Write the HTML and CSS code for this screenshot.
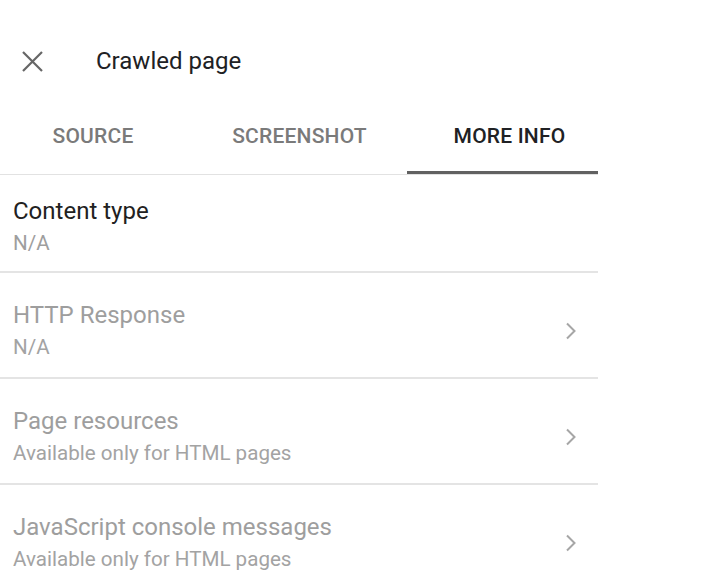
FILE: index.html
```html
<!DOCTYPE html>
<html>
<head>
<meta charset="utf-8">
<link rel="stylesheet" href="styles.css">
</head>
<body>
<div class="panel">
  <div class="header">
    <svg class="close" width="23" height="23" viewBox="0 0 23 23"><path d="M2 2L21 21M21 2L2 21" stroke="#666666" stroke-width="2.2" fill="none"/></svg>
    <div class="title">Crawled page</div>
  </div>
  <div class="tabs">
    <div class="tab tab-1">SOURCE</div>
    <div class="tab tab-2">SCREENSHOT</div>
    <div class="tab tab-3 active">MORE INFO</div>
  </div>
  <div class="row first">
    <div class="text">
      <div class="row-title">Content type</div>
      <div class="row-sub">N/A</div>
    </div>
  </div>
  <div class="row disabled">
    <div class="text">
      <div class="row-title">HTTP Response</div>
      <div class="row-sub">N/A</div>
    </div>
    <svg class="chev" width="12" height="18" viewBox="0 0 12 18"><path d="M2 1.5L9.5 9L2 16.5" stroke="#a6a6a6" stroke-width="2" fill="none"/></svg>
  </div>
  <div class="row disabled">
    <div class="text">
      <div class="row-title">Page resources</div>
      <div class="row-sub">Available only for HTML pages</div>
    </div>
    <svg class="chev" width="12" height="18" viewBox="0 0 12 18"><path d="M2 1.5L9.5 9L2 16.5" stroke="#a6a6a6" stroke-width="2" fill="none"/></svg>
  </div>
  <div class="row disabled last">
    <div class="text">
      <div class="row-title">JavaScript console messages</div>
      <div class="row-sub">Available only for HTML pages</div>
    </div>
    <svg class="chev" width="12" height="18" viewBox="0 0 12 18"><path d="M2 1.5L9.5 9L2 16.5" stroke="#a6a6a6" stroke-width="2" fill="none"/></svg>
  </div>
</div>
</body>
</html>
```
FILE: styles.css
```css
html, body {
  margin: 0;
  padding: 0;
  background: #ffffff;
}
body {
  font-family: Roboto, "Liberation Sans", sans-serif;
  color: #202124;
}
.panel {
  width: 598px;
}
.header {
  display: flex;
  align-items: center;
  padding-top: 45px;
  height: 32px;
}
.close {
  margin-left: 21px;
  flex: none;
}
.title {
  margin-left: 52px;
  font-size: 24px;
  line-height: 32px;
  color: #202124;
}
.tabs {
  display: flex;
  border-bottom: 1px solid #e2e2e2;
}
.tab {
  box-sizing: border-box;
  padding-top: 45px;
  padding-bottom: 21px;
  border-bottom: 3px solid transparent;
  font-size: 21px;
  line-height: 28px;
  font-weight: 500;
  letter-spacing: 0.2px;
  color: #7a7a7a;
  text-align: center;
}
.tab-1 { width: 186px; }
.tab-2 { width: 221px; padding-left: 6px; }
.tab-3 { width: 191px; padding-left: 14px; }
.tab.active {
  color: #202124;
  border-bottom-color: #616161;
}
.row {
  display: flex;
  align-items: center;
  padding: 26px 0 14px 13px;
  border-bottom: 2px solid #e4e4e4;
}
.row.first {
  padding-top: 20px;
  padding-bottom: 12px;
}
.row.last {
  border-bottom: none;
}
.text {
  flex: 1;
}
.row-title {
  font-size: 24px;
  line-height: 32px;
  color: #212121;
}
.row-sub {
  font-size: 20.6px;
  line-height: 32px;
  color: #9e9e9e;
}
.row.disabled .row-title {
  color: #9e9e9e;
}
.row.disabled .row-sub {
  color: #a3a3a3;
}
.chev {
  flex: none;
  margin-right: 21px;
}
```
